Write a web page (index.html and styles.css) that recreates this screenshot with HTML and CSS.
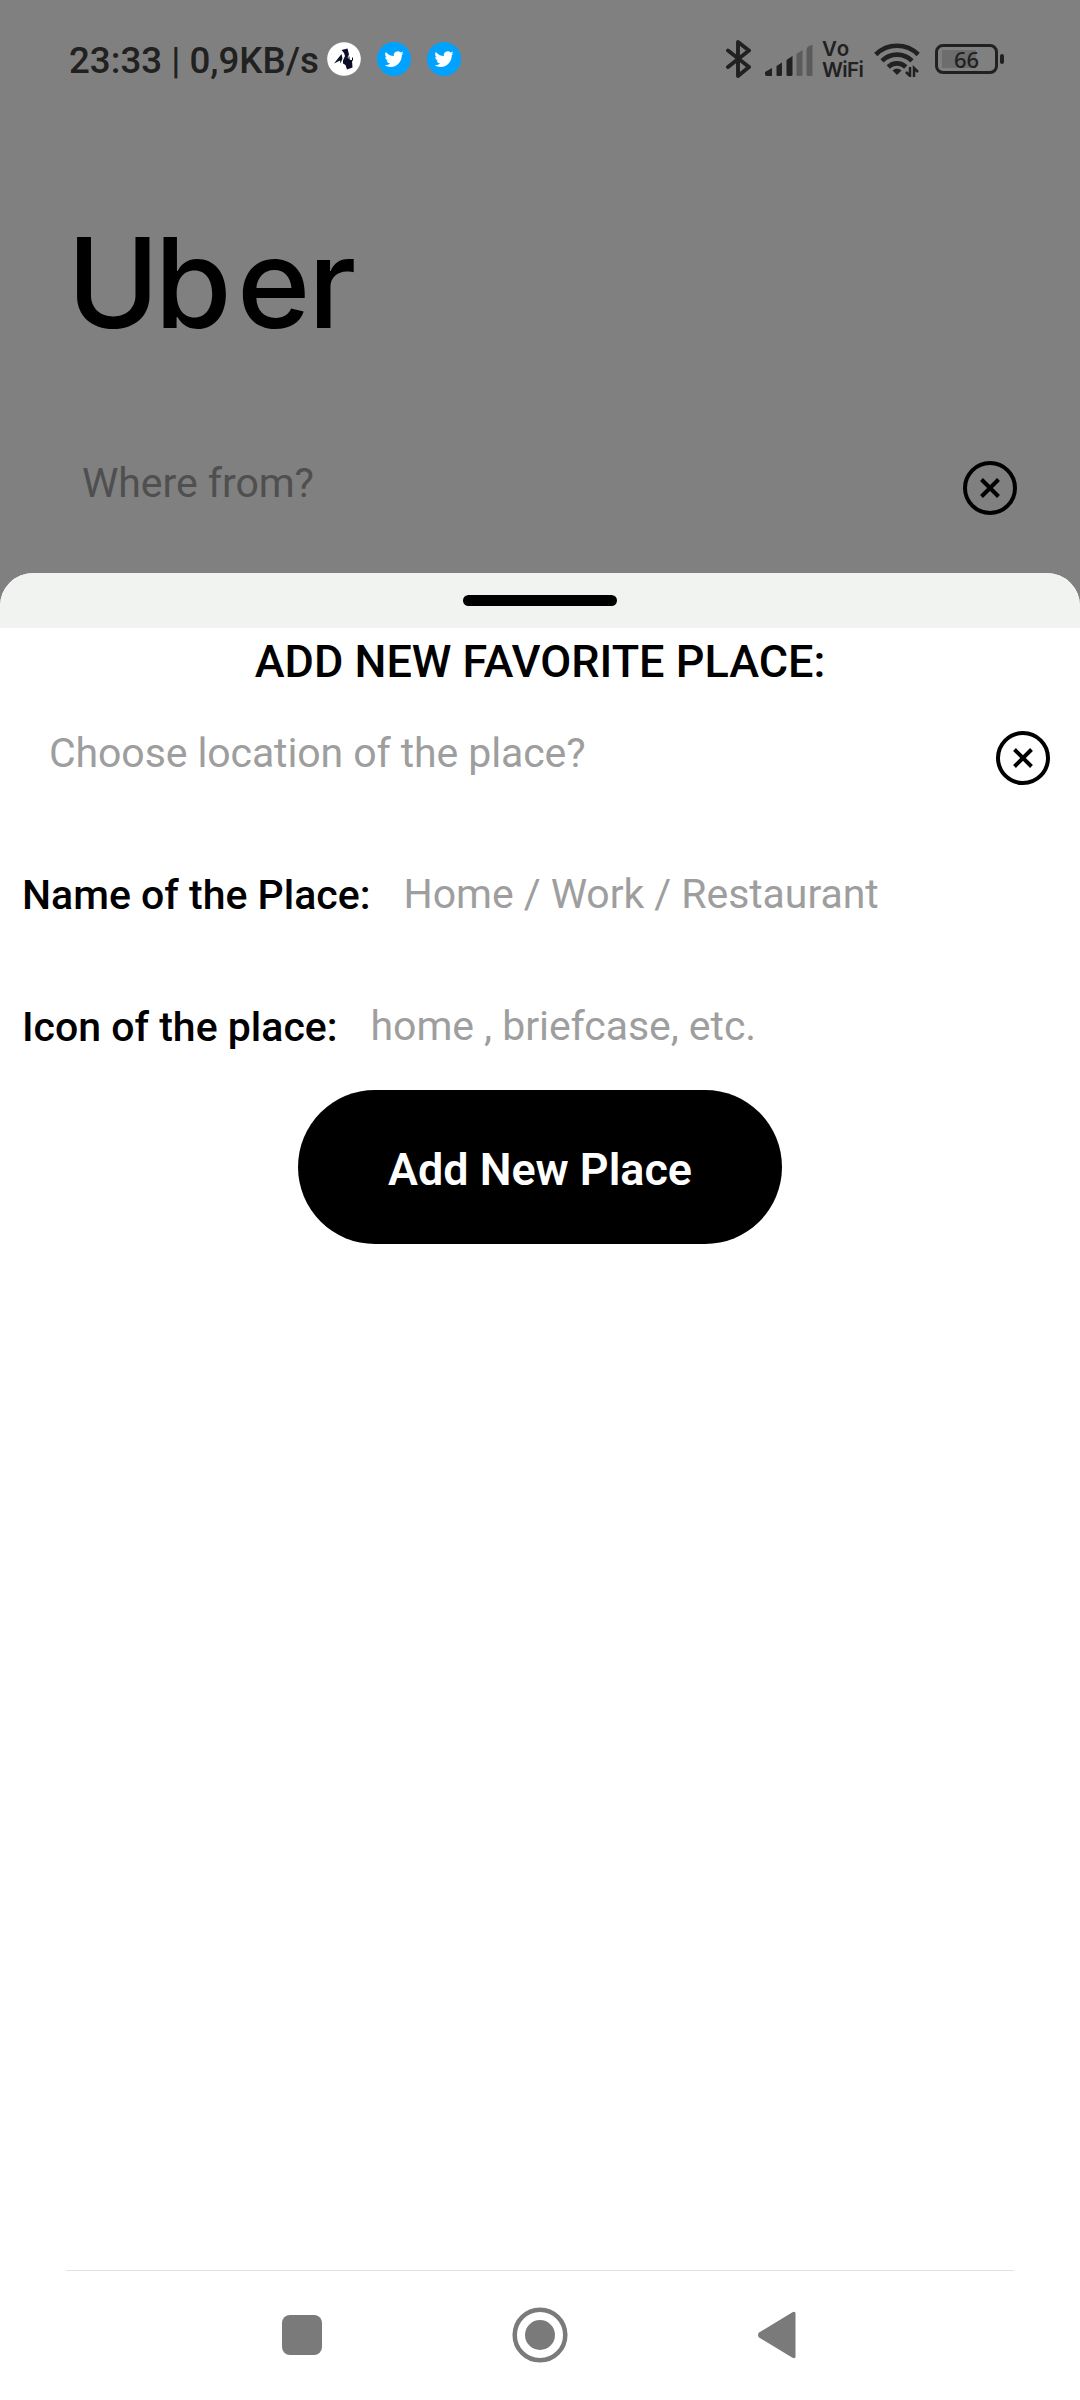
FILE: index.html
```html
<!DOCTYPE html>
<html lang="en">
<head>
<meta charset="utf-8">
<title>Add new favorite place</title>
<link rel="stylesheet" href="styles.css">
</head>
<body>
<div class="screen">
  <header class="status">
    <span class="clock">23:33 | 0,9KB/s</span>
    <div class="notes">
      <svg width="34" height="34" viewBox="0 0 34 34"><circle cx="17" cy="17" r="16.8" fill="#fff"/><path d="M14.500 8l6-1.500 1.500 6-1.500 3 2 2 2.500 1 .500 7-5.500 2-1.500-4.500-2.500-1.500v-3l2-4.500-1-3z" fill="#0b0d26"/><path d="M14.500 12L7 21.500l6-3 .500 3 2-5" fill="#0b0d26"/><path d="M22 14.500v4h3.500v-3" fill="none" stroke="#0b0d26" stroke-width="1"/></svg>
      <svg width="34" height="34" viewBox="0 0 34 34"><circle cx="17" cy="17" r="17" fill="#00a2ff"/><path transform="translate(7.500 7.500) scale(.8)" d="M23.950 4.570a10 10 0 0 1-2.820.770 4.960 4.960 0 0 0 2.160-2.720 9.900 9.900 0 0 1-3.120 1.180 4.920 4.920 0 0 0-8.380 4.480C7.690 8.100 4.070 6.130 1.640 3.160a4.920 4.920 0 0 0 1.520 6.570 4.900 4.900 0 0 1-2.230-.610v.060a4.920 4.920 0 0 0 3.950 4.830 5 5 0 0 1-2.210.080 4.940 4.940 0 0 0 4.600 3.420A9.870 9.870 0 0 1 0 19.540a14 14 0 0 0 7.550 2.210c9.050 0 14-7.500 14-13.980 0-.210 0-.420-.020-.630a9.900 9.900 0 0 0 2.420-2.570z" fill="#fff"/></svg>
      <svg width="34" height="34" viewBox="0 0 34 34"><circle cx="17" cy="17" r="17" fill="#00a2ff"/><path transform="translate(7.500 7.500) scale(.8)" d="M23.950 4.570a10 10 0 0 1-2.820.770 4.960 4.960 0 0 0 2.160-2.720 9.900 9.900 0 0 1-3.120 1.180 4.920 4.920 0 0 0-8.380 4.480C7.690 8.100 4.070 6.130 1.640 3.160a4.920 4.920 0 0 0 1.520 6.570 4.900 4.900 0 0 1-2.230-.610v.060a4.920 4.920 0 0 0 3.950 4.830 5 5 0 0 1-2.210.080 4.940 4.940 0 0 0 4.600 3.420A9.870 9.870 0 0 1 0 19.540a14 14 0 0 0 7.550 2.210c9.050 0 14-7.500 14-13.980 0-.210 0-.420-.020-.630a9.900 9.900 0 0 0 2.420-2.570z" fill="#fff"/></svg>
    </div>
    <div class="system">
      <svg class="bluetooth" width="25" height="40" viewBox="0 0 25 40"><path d="M2 11.500L23 28 12 37V3l11 8.500L2 28" fill="none" stroke="#212121" stroke-width="3.900" stroke-linejoin="round" stroke-linecap="round"/></svg>
      <svg class="signal" width="48" height="32" viewBox="0 0 48 32"><g fill="#212121"><path d="M0 27l7-4v8H1.500Q0 31 0 29z"/><path d="M11.500 21l5.500-3.500v12q0 1.500-1.500 1.500h-3q-1 0-1-1z"/><path d="M21.500 15l6-4v18.500q0 1.500-1.500 1.500h-3q-1.500 0-1.500-1.500z"/></g><g fill="#5b5b5b"><path d="M31.500 9l6-4v24.500q0 1.500-1.500 1.500h-3q-1.500 0-1.500-1.500z"/><path d="M41.500 4q2-4 6-4v29.500q0 1.500-1.500 1.500h-3q-1.500 0-1.500-1.500z"/></g></svg>
      <div class="vowifi"><span class="vo">Vo</span><span>WiFi</span></div>
      <svg class="wifi" width="46" height="36" viewBox="0 0 46 36"><g fill="none" stroke="#212121" stroke-width="4.600"><path d="M1.800 13.500a30 30 0 0 1 42.400 0"/><path d="M8 19.800a21.200 21.200 0 0 1 30 0"/><path d="M14.200 26a12.600 12.600 0 0 1 17.600 0"/></g><path d="M18.500 29.500q4.500-4 9 0L23 34z" fill="#212121"/><path d="M36 26v9l-4-4M40 36v-9l4 4" fill="none" stroke="#212121" stroke-width="2.500"/></svg>
      <div class="battery"><span class="cell">66</span><i class="tip"></i></div>
    </div>
  </header>
  <h1 class="brand"><svg width="300" height="160" viewBox="0 -10 300 160"><text x="0 87.500 170 241" y="118">Uber</text></svg></h1>
  <div class="origin">
    <span class="hint">Where from?</span>
    <svg class="close" width="56" height="56" viewBox="0 0 56 56"><circle cx="28" cy="28" r="25" /><path d="M19.500 19.500l17 17M36.500 19.500l-17 17"/></svg>
  </div>
  <main class="sheet">
    <div class="grip"><i></i></div>
    <h2 class="title">ADD NEW FAVORITE PLACE:</h2>
    <div class="location">
      <span class="hint">Choose location of the place?</span>
      <svg class="close" width="56" height="56" viewBox="0 0 56 56"><circle cx="28" cy="28" r="25" /><path d="M19.500 19.500l17 17M36.500 19.500l-17 17"/></svg>
    </div>
    <div class="field"><label>Name of the Place:</label><span class="hint">Home / Work / Restaurant</span></div>
    <div class="field"><label>Icon of the place:</label><span class="hint">home , briefcase, etc.</span></div>
    <button class="add">Add New Place</button>
  </main>
  <nav class="nav">
    <svg width="40" height="40" viewBox="0 0 40 40"><rect width="40" height="40" rx="8" fill="#7a7a7a"/></svg>
    <svg width="56" height="56" viewBox="0 0 56 56"><circle cx="28" cy="28" r="25.300" fill="none" stroke="#7a7a7a" stroke-width="4.500"/><circle cx="28" cy="28" r="15" fill="#7a7a7a"/></svg>
    <svg width="38" height="48" viewBox="0 0 38 48"><path d="M1 21.500L34.500 1.200Q37.500 0 37.500 2.500v43q0 2.500-3 1.300L1 26.500q-2-2.500 0-5z" fill="#7a7a7a"/></svg>
  </nav>
</div>
</body>
</html>
```
FILE: styles.css
```css
* { box-sizing: border-box; }
body { margin: 0; background: #fff; font-family: Roboto, sans-serif; color: #000; }
svg { display: block; flex: none; }
.screen { width: 1080px; height: 2400px; display: flex; flex-direction: column; background: #808080; overflow: hidden; }
.status { height: 118px; display: flex; align-items: center; padding: 0 76px 0 69px; color: #212121; flex: none; }
.clock { font-size: 36.7px; font-weight: 500; width: 258px; white-space: nowrap; line-height: 44px; margin-top: 4px; }
.notes { display: flex; gap: 16px; }
.system { display: flex; align-items: center; margin-left: auto; }
.signal { margin: 4px 0 0 14px; }
.vowifi { margin-left: 9px; width: 42px; font: 600 20.5px/21px Inter, sans-serif; letter-spacing: -0.6px; display: flex; flex-direction: column; }
.vo { letter-spacing: 1px; }
.wifi { margin-left: 10px; }
.battery { display: flex; align-items: center; gap: 2px; margin-left: 15px; }
.cell { width: 63px; height: 30px; border: 3px solid #212121; border-radius: 8px; font: 500 22px/25px "Noto Sans", sans-serif; text-align: center; background: linear-gradient(#6d6d6d, #6d6d6d) 4px 3px / 34px 18px no-repeat; }
.tip { width: 4px; height: 10px; border-radius: 2px; background: #212121; }
.brand { margin: 0; height: 326px; padding: 82px 0 0 67px; font: 550 125px/150px Inter, sans-serif; flex: none; }
.brand svg { overflow: visible; }
.origin { height: 129px; display: flex; align-items: flex-start; justify-content: space-between; padding: 15px 62px 0 82px; flex: none; }
.origin .hint { color: #4f4f4f; }
.hint { font-size: 41px; line-height: 48px; color: #9e9e9e; white-space: nowrap; letter-spacing: -0.06px; }
.close { fill: none; stroke: #000; stroke-width: 4; margin-top: 1px; }
.sheet { flex: 1; display: flex; flex-direction: column; background: #fff; border-radius: 33px 33px 0 0; overflow: hidden; }
.grip { height: 55px; background: #f1f3f0; display: flex; justify-content: center; align-items: center; flex: none; }
.grip i { width: 154px; height: 11px; border-radius: 5.5px; background: #000; }
.title { margin: 8px 0 0; text-align: center; font-size: 45px; line-height: 52px; font-weight: 550; }
.location { display: flex; justify-content: space-between; padding: 41px 29px 0 49px; height: 138px; }
.location .hint { letter-spacing: -0.1px; }
.field { display: flex; align-items: center; gap: 33px; height: 132px; padding: 4px 0 0 22px; }
.field label { font-size: 41px; font-weight: 550; line-height: 48px; padding-top: 2px; }
.add { align-self: center; width: 484px; height: 154px; border: 0; border-radius: 77px; background: #000; color: #fff; font: 600 44.9px/52px Roboto, sans-serif; padding: 5px 0 0; }
.nav { height: 131px; margin: 0; background: linear-gradient(#e3e3e3, #e3e3e3) 66px 1px / 948px 1px no-repeat #fff; display: flex; align-items: center; justify-content: space-between; padding: 0 284px 0 282px; flex: none; }
```
